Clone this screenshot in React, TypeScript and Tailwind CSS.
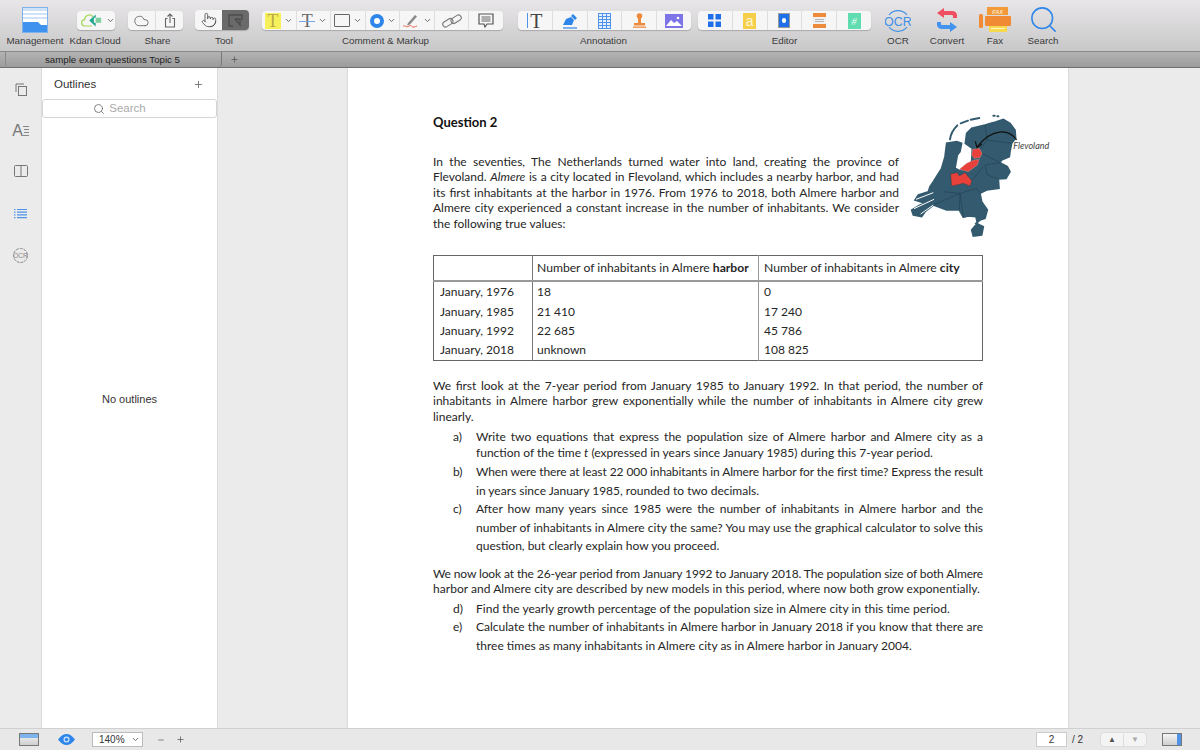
import type { ReactNode } from "react";
import { ChevronDown, Cloud, Minus, Plus, Pointer, Search } from "lucide-react";

const Chevron = () => (
  <ChevronDown className="w-[9px] h-[9px] text-[#666] ml-[3px] shrink-0" strokeWidth={2.5} />
);

const Cell = ({ children, last }: { children: ReactNode; last?: boolean }) => (
  <div
    className={`flex-1 h-full flex items-center justify-center ${
      last ? "" : "border-r border-[#dedede]"
    }`}
  >
    {children}
  </div>
);

const BtnGroup = ({ children }: { children: ReactNode }) => (
  <div className="h-[19px] mt-[11px] flex items-center rounded-[4px] bg-[#f6f6f6] shadow-[0_1px_1px_rgba(0,0,0,0.2)]">
    {children}
  </div>
);

const Group = ({
  label,
  className,
  labelClass = "",
  children,
}: {
  label: string;
  className: string;
  labelClass?: string;
  children: ReactNode;
}) => (
  <div className={`relative shrink-0 h-full ${className}`}>
    {children}
    <div
      className={`absolute left-[-20px] right-[-20px] top-[35px] text-center text-[9.800px] leading-[12px] text-[#3a3a3a] ${labelClass}`}
    >
      {label}
    </div>
  </div>
);

const Toolbar = () => (
  <div className="h-[51px] flex bg-gradient-to-b from-[#e8e6e8] to-[#c9c8c9]">
    <Group label="Management" className="w-[26px] ml-[22px]">
      <svg width="26" height="26" viewBox="0 0 26 26" className="mt-[7px]">
        <rect x="0.5" y="0.5" width="25" height="25" fill="#fff" stroke="#7fb2ea" />
        <rect x="1" y="1" width="24" height="3" fill="#cfe2f8" />
        <rect x="1" y="6" width="24" height="2" fill="#cfe2f8" />
        <rect x="1" y="10" width="24" height="2" fill="#cfe2f8" />
        <path d="M1 15h15l3 3h6v7H1z" fill="#3f93ee" />
      </svg>
    </Group>
    <Group label="Kdan Cloud" className="w-[38px] ml-[29px]" labelClass="-translate-x-[1px]">
      <BtnGroup>
        <svg width="24" height="15" viewBox="0 0 24 15" className="ml-[4px]">
          <path
            d="M12 13.500H4.500a3.500 3.500 0 0 1-.5-7 5 5 0 0 1 9-3"
            fill="none"
            stroke="#a5d65a"
            strokeWidth="1.300"
          />
          <path d="M16 1v3.500h-2V10h2v4L9 7.500z" fill="#1fa58c" />
          <path d="M16 4.500h6V10h-6z" fill="#7ed0a0" />
        </svg>
        <Chevron />
      </BtnGroup>
    </Group>
    <Group label="Share" className="w-[55px] ml-[13px]" labelClass="translate-x-[2px]">
      <BtnGroup>
        <Cell>
          <Cloud className="w-[17px] h-[16px] text-[#666]" strokeWidth={1.3} />
        </Cell>
        <Cell last>
          <svg width="12" height="15" viewBox="0 0 12 15" fill="none" stroke="#666" strokeWidth="1.1">
            <path d="M3.5 5.5H1.5v8.5h9V5.5H8.500" />
            <path d="M6 10V1M3.500 3.500 6 1l2.500 2.500" />
          </svg>
        </Cell>
      </BtnGroup>
    </Group>
    <Group label="Tool" className="w-[54px] ml-[12px]" labelClass="translate-x-[2px]">
      <div className="h-[20px] mt-[10px] flex rounded-[4px] bg-[#f6f6f6] shadow-[0_1px_1px_rgba(0,0,0,0.2)] overflow-hidden">
        <div className="flex-1 flex items-center justify-center">
          <Pointer className="w-[16px] h-[18px] text-[#555]" strokeWidth={1.3} />
        </div>
        <div className="flex-1 flex items-center justify-center bg-[#6a6a6a]">
          <svg width="15" height="13" viewBox="0 0 15 13" fill="none" stroke="#4c4c4c" strokeWidth="1.300">
            <path d="M5 12H1V1h13v5" />
            <path d="M7 5h5v5M7 5l6 7" />
          </svg>
        </div>
      </div>
    </Group>
    <Group label="Comment & Markup" className="w-[241px] ml-[13px]" labelClass="translate-x-[3px]">
      <BtnGroup>
        <Cell>
          <span className="flex items-center">
            <span className="w-[16px] h-[16px] bg-[#f6f05a] text-[#b9a94a] text-[18px] leading-[16px] text-center font-['Liberation_Serif',serif]">
              T
            </span>
            <Chevron />
          </span>
        </Cell>
        <Cell>
          <span className="flex items-center">
            <span className="relative w-[16px] h-[16px] text-[#666] text-[18px] leading-[16px] text-center font-['Liberation_Serif',serif]">
              T
              <span className="absolute left-0 right-0 top-[8px] h-px bg-[#7aa6e6]" />
            </span>
            <Chevron />
          </span>
        </Cell>
        <Cell>
          <span className="flex items-center">
            <span className="w-[16px] h-[13px] border border-[#666] rounded-[1px]" />
            <Chevron />
          </span>
        </Cell>
        <Cell>
          <span className="flex items-center">
            <span className="w-[14px] h-[14px] rounded-full border-[4px] border-[#2f86ea] bg-white" />
            <Chevron />
          </span>
        </Cell>
        <Cell>
          <span className="flex items-center">
            <svg width="18" height="16" viewBox="0 0 18 16" fill="none">
              <path d="M6 10 13 2l2 1.500-7 8-3 1z" fill="#8a8a8a" />
              <path d="M1 13.500c2-2 3 1 5 0s3-1.500 4 0 3 0 5-.5" stroke="#e8664a" />
            </svg>
            <Chevron />
          </span>
        </Cell>
        <Cell>
          <svg width="20" height="14" viewBox="0 0 20 14" fill="none" stroke="#777" strokeWidth="1.100">
            <rect x="0.500" y="6" width="11" height="5.500" rx="2.700" transform="rotate(-32 6 9)" />
            <rect x="8.500" y="2.500" width="11" height="5.500" rx="2.700" transform="rotate(-32 14 5)" />
          </svg>
        </Cell>
        <Cell last>
          <svg width="16" height="15" viewBox="0 0 16 15" fill="none" stroke="#555" strokeWidth="1.200">
            <path d="M1 1h14v10H9l-2 3-1-3H1z" />
            <path d="M3.500 4h9M3.500 6h9M3.500 8h9" strokeWidth="0.900" />
          </svg>
        </Cell>
      </BtnGroup>
    </Group>
    <Group label="Annotation" className="w-[173px] ml-[15px]" labelClass="-translate-x-[1px]">
      <BtnGroup>
        <Cell>
          <span className="flex items-center text-[#444] text-[20px] leading-[18px] font-['Liberation_Serif',serif]">
            <span className="w-px h-[15px] bg-[#4f94e8] mr-[2px]" />T
          </span>
        </Cell>
        <Cell>
          <svg width="16" height="16" viewBox="0 0 16 16">
            <path d="M1 12 4 6l5-2 3 3-2 5zM9 3l2-2 4 4-2 2z" fill="#2f86ea" />
            <path d="M1 15h14" stroke="#2f86ea" strokeWidth="1.200" />
          </svg>
        </Cell>
        <Cell>
          <svg width="13" height="16" viewBox="0 0 13 16">
            <rect x="0.500" y="0.500" width="12" height="15" fill="#e6f0fc" stroke="#4f94e8" />
            <path d="M0 3.500h13M0 6.500h13M0 9.500h13M0 12.500h13M4.500 0v16M8.500 0v16" stroke="#4f94e8" />
          </svg>
        </Cell>
        <Cell>
          <svg width="13" height="15" viewBox="0 0 13 15" fill="#ee8a3c">
            <circle cx="6.500" cy="3" r="2.800" />
            <rect x="5" y="4" width="3" height="6" />
            <rect x="1" y="10" width="11" height="2.500" />
            <rect x="0" y="13.500" width="13" height="1.300" />
          </svg>
        </Cell>
        <Cell last>
          <svg width="18" height="14" viewBox="0 0 18 14">
            <rect width="18" height="14" fill="#7d74e8" />
            <path d="M1 12 6 6l3 3 3-2 5 5z" fill="#fff" />
            <circle cx="13" cy="4" r="1.300" fill="#fff" />
          </svg>
        </Cell>
      </BtnGroup>
    </Group>
    <Group label="Editor" className="w-[173px] ml-[7px]">
      <BtnGroup>
        <Cell>
          <svg width="13" height="13" viewBox="0 0 13 13" fill="#1f6fe8">
            <rect width="5.500" height="5.500" />
            <rect x="7.500" width="5.500" height="5.500" />
            <rect y="7.500" width="5.500" height="5.500" />
            <rect x="7.500" y="7.500" width="5.500" height="5.500" />
          </svg>
        </Cell>
        <Cell>
          <span className="w-[13px] h-[16px] bg-[#f6cf4a] text-[#fff7d8] text-[14px] leading-[17px] text-center font-['Liberation_Sans',sans-serif]">
            a
          </span>
        </Cell>
        <Cell>
          <span className="w-[12px] h-[15px] bg-[#1f6fe8] border border-[#9a9a9a] flex items-center justify-center">
            <span className="w-[4px] h-[5px] rounded-full bg-white" />
          </span>
        </Cell>
        <Cell>
          <span className="w-[13px] h-[15px] flex flex-col justify-between bg-[#f0f0f0]">
            <span className="h-[4px] bg-[#ee8a3c]" />
            <span className="h-[3px] mx-[2px] border-y border-[#b5b5b5]" />
            <span className="h-[4px] bg-[#ee8a3c]" />
          </span>
        </Cell>
        <Cell last>
          <span className="w-[13px] h-[16px] bg-[#5fdcb0] text-[#e9fff6] text-[11px] leading-[17px] italic text-center font-['Liberation_Serif',serif]">
            #
          </span>
        </Cell>
      </BtnGroup>
    </Group>
    <Group label="OCR" className="w-[24px] ml-[15px]">
      <svg width="26" height="26" viewBox="0 0 26 26" className="mt-[8px] ml-[-1px]" fill="none" stroke="#3d8fe8">
        <path d="M4 7a11.500 11.500 0 0 1 18 0M4 19a11.500 11.500 0 0 0 18 0" strokeWidth="1.200" />
        <text
          x="13"
          y="17.500"
          textAnchor="middle"
          fontSize="12.500"
          fill="#3d8fe8"
          stroke="none"
          fontFamily="Liberation Sans"
        >
          OCR
        </text>
      </svg>
    </Group>
    <Group label="Convert" className="w-[22px] ml-[26px]">
      <svg width="22" height="26" viewBox="0 0 22 26" className="mt-[7px]">
        <path d="M1 6 8 1v3h8c3 0 5 2 5 4v3h-4V9c0-1-1-1-2-1H8v3z" fill="#ef4f60" />
        <path d="M21 20l-7 5v-3H6c-3 0-5-2-5-4v-3h4v2c0 1 1 1 2 1h7v-3z" fill="#4293ee" />
      </svg>
    </Group>
    <Group label="Fax" className="w-[32px] ml-[21px]">
      <svg width="32" height="27" viewBox="0 0 32 27" className="mt-[6px]">
        <rect x="8" y="1" width="21" height="8" fill="#f29a3a" />
        <text
          x="18.500"
          y="7.500"
          textAnchor="middle"
          fontSize="5.500"
          fontWeight="700"
          fontStyle="italic"
          fill="#fde6c6"
          fontFamily="Liberation Sans"
        >
          FAX
        </text>
        <rect x="6" y="10" width="26" height="10" rx="1" fill="#f08a34" />
        <rect x="0" y="8" width="4" height="14" rx="1.500" fill="#f08a34" />
        <rect x="10" y="20" width="18" height="6" fill="#f7d84e" />
        <rect x="12" y="22" width="14" height="1" fill="#fff6c0" />
      </svg>
    </Group>
    <Group label="Search" className="w-[24px] ml-[20px]">
      <Search className="w-[31px] h-[31px] mt-[4px] ml-[-3px] text-[#2f86ea]" strokeWidth={1.200} />
    </Group>
  </div>
);

const TabBar = () => (
  <div className="h-[17px] flex bg-gradient-to-b from-[#b3b3b3] to-[#9c9c9c] border-t border-[#8a8a8a] border-b border-b-[#6f6f6f]">
    <div className="w-[217px] ml-[5px] border-l border-[#8a8a8a] border-r border-r-[#777] rounded-b-[4px] pl-[39px] text-[9.700px] leading-[15px] text-[#222]">
      sample exam questions Topic 5
    </div>
    <Plus className="w-[9px] h-[9px] ml-[8px] mt-[3px] text-[#555]" strokeWidth={2} />
  </div>
);

const Rail = () => (
  <div className="w-[42px] shrink-0 bg-[#ebebeb] border-r border-[#dcdcdc] flex flex-col items-center gap-[26px] pt-[15px]">
    <svg width="12" height="13" viewBox="0 0 12 13" fill="none" stroke="#777">
      <path d="M1 9V1h8" />
      <rect x="3.500" y="3.500" width="8" height="9" />
    </svg>
    <div className="flex items-center h-[16px] mt-[1px] text-[#777] text-[16px] leading-[16px] font-['Liberation_Sans',sans-serif]">
      A
      <svg width="6" height="12" viewBox="0 0 6 12" stroke="#888">
        <path d="M0 1.500h6M1 4.500h5M1 7.500h5M0 10.500h6" />
      </svg>
    </div>
    <svg width="14" height="12" viewBox="0 0 14 12" fill="none" stroke="#777">
      <rect x="0.500" y="0.500" width="13" height="11" rx="1" />
      <path d="M7 0.500v11" />
    </svg>
    <svg width="13" height="11" viewBox="0 0 13 11" stroke="#4f94e8" className="mt-[5px]" strokeWidth="1.200">
      <path d="M3 1.500h10M3 4.200h10M3 6.900h10M3 9.600h10" />
      <path d="M0 1.500h1.500M0 4.200h1.500M0 6.900h1.500M0 9.600h1.500" />
    </svg>
    <svg width="15" height="15" viewBox="0 0 15 15" fill="none" stroke="#888" className="mt-[3px]">
      <circle cx="7.500" cy="7.500" r="7" strokeDasharray="3 1" />
      <text x="7.500" y="10" textAnchor="middle" fontSize="6.500" fill="#888" stroke="none" fontFamily="Liberation Sans">
        OCR
      </text>
    </svg>
  </div>
);

const Sidebar = () => (
  <div className="w-[176px] shrink-0 bg-white border-r border-[#dadada] flex flex-col">
    <div className="h-[31px] shrink-0 flex items-center justify-between pt-[2px] pl-[12px] pr-[13px] text-[11.500px] text-[#333]">
      <span>Outlines</span>
      <Plus className="w-[11px] h-[11px] text-[#555]" strokeWidth={1.600} />
    </div>
    <div className="h-[19px] shrink-0 border border-[#d5d5d5] rounded-[3px] flex items-center justify-center gap-[4px] text-[11.500px] text-[#aaa] pr-[20px]">
      <Search className="w-[12px] h-[12px] text-[#666]" strokeWidth={1.600} />
      Search
    </div>
    <div className="pt-[275px] text-center text-[11px] leading-[12px] text-[#333]">No outlines</div>
  </div>
);

const NetherlandsMap = () => (
  <svg width="170" height="135" viewBox="0 0 510 405">
    <path
      d="M196 100 200 70 215 55 255 45 280 38 310 28 330 40 345 60 347 85 335 100 330 125 328 140 305 150 300 158 322 170 330 185 318 205 295 207 297 235 260 240 240 250 245 275 262 300 255 325 240 330 228 340 250 350 245 375 220 378 215 360 232 340 228 320 205 318 190 322 178 300 140 300 100 285 75 305 65 320 40 315 35 300 60 285 75 280 45 270 55 255 85 245 90 230 100 215 125 175 135 140 140 100 170 95 185 100 180 125 172 135 165 175 180 182 215 155 217 115z"
      fill="#335a6e"
      stroke="#335a6e"
      strokeWidth="5"
    />
    <path d="M48 268 100 248M42 296 102 268M62 312 100 285" stroke="#fff" strokeWidth="3" fill="none" />
    <path
      d="M150 88C152 70 160 58 172 46M182 40 204 32M212 29 238 24M280 17h4M292 19h3"
      stroke="#335a6e"
      strokeWidth="6"
      fill="none"
      strokeLinecap="round"
    />
    <path
      d="M255 45 262 90 240 118M262 90 335 100M246 130 300 158 255 165 262 195 295 207M130 245 180 250 230 235 240 250M100 285 180 250 190 322M180 250 178 300M215 212 250 170"
      stroke="#1f3a4a"
      strokeWidth="1.500"
      fill="none"
    />
    <path d="M218 118 238 115 246 130 240 143 222 145 215 135z" fill="#e8403a" stroke="#bdbdbd" />
    <path d="M222 150 238 148 232 165 205 185 178 178 200 160z" fill="#e8403a" stroke="#bdbdbd" />
    <path d="M152 192 172 188 178 198 195 188 215 212 210 228 190 220 170 225 155 228z" fill="#e8403a" stroke="#333" />
    <path d="M350 90C325 55 275 55 232 110" fill="none" stroke="#111" strokeWidth="3.500" />
    <path d="M226 94 231 113 246 102" fill="none" stroke="#111" strokeWidth="3.500" />
    <text x="340" y="116" fontSize="27" fontStyle="italic" fill="#444" fontFamily="Lato">
      Flevoland
    </text>
  </svg>
);

// single line of the scanned page, keeps the original line breaks
const Line = ({
  children,
  plain,
  className = "",
}: {
  children: ReactNode;
  plain?: boolean;
  className?: string;
}) => (
  <div
    className={`whitespace-nowrap ${plain ? "" : "text-justify [text-align-last:justify]"} ${className}`}
  >
    {children}
  </div>
);

const ListItem = ({ mark, children }: { mark: string; children: ReactNode }) => (
  <div className="flex">
    <div className="w-[43px] shrink-0 pl-[20px]">{mark}</div>
    <div className="flex-1 min-w-0">{children}</div>
  </div>
);

const rows = [
  ["January, 1976", "18", "0"],
  ["January, 1985", "21 410", "17 240"],
  ["January, 1992", "22 685", "45 786"],
  ["January, 2018", "unknown", "108 825"],
];

const DataTable = () => (
  <table className="w-[550px] mt-[23px] table-fixed border-collapse border border-[#666] text-[12px]">
    <thead>
      <tr className="h-[25px] border-b-2 border-[#999]">
        <th className="w-[99px] border-r border-[#777]" />
        <th className="w-[226px] border-r border-[#999] font-normal text-left pl-[4px] text-[12.150px]">
          Number of inhabitants in Almere <b>harbor</b>
        </th>
        <th className="font-normal text-left pl-[5px] text-[12.150px]">
          Number of inhabitants in Almere <b>city</b>
        </th>
      </tr>
    </thead>
    <tbody>
      {rows.map((r, i) => (
        <tr key={r[0]} className={i === 0 ? "h-[21px]" : "h-[19.500px]"}>
          <td className="border-r border-[#777] pl-[6px]">{r[0]}</td>
          <td className="border-r border-[#999] pl-[4px]">{r[1]}</td>
          <td className="pl-[5px]">{r[2]}</td>
        </tr>
      ))}
    </tbody>
  </table>
);

const ExamPage = () => (
  <div className="w-[720px] ml-[130px] shrink-0 bg-white shadow-[0_0_2px_rgba(0,0,0,0.2)] pl-[85px] pr-[85px] pt-[47px] font-['Lato',sans-serif] text-[12px] leading-[15.500px] text-[#262626]">
    <div className="flex h-[117px]">
      <div className="w-[466px] shrink-0">
        <div className="text-[13px] font-bold text-[#111]">Question 2</div>
        <div className="mt-[23px]">
          <Line>In the seventies, The Netherlands turned water into land, creating the province of</Line>
          <Line>
            Flevoland. <i>Almere</i> is a city located in Flevoland, which includes a nearby harbor, and had
          </Line>
          <Line>its first inhabitants at the harbor in 1976. From 1976 to 2018, both Almere harbor and</Line>
          <Line>Almere city experienced a constant increase in the number of inhabitants. We consider</Line>
          <Line plain>the following true values:</Line>
        </div>
      </div>
      <div className="w-0 h-0 mt-[-5px] ml-[1px]">
        <NetherlandsMap />
      </div>
    </div>
    <DataTable />
    <div className="mt-[17px]">
      <Line>We first look at the 7-year period from January 1985 to January 1992. In that period, the number of</Line>
      <Line>inhabitants in Almere harbor grew exponentially while the number of inhabitants in Almere city grew</Line>
      <Line plain>linearly.</Line>
    </div>
    <div className="mt-[5px]">
      <ListItem mark="a)">
        <Line>Write two equations that express the population size of Almere harbor and Almere city as a</Line>
        <Line plain>
          function of the time <i>t</i> (expressed in years since January 1985) during this 7-year period.
        </Line>
      </ListItem>
      <div className="mt-[3px] leading-[18.500px]">
        <ListItem mark="b)">
          <Line className="tracking-[-0.110px]">
            When were there at least 22 000 inhabitants in Almere harbor for the first time? Express the result
          </Line>
          <Line plain>in years since January 1985, rounded to two decimals.</Line>
        </ListItem>
        <ListItem mark="c)">
          <Line>After how many years since 1985 were the number of inhabitants in Almere harbor and the</Line>
          <Line>number of inhabitants in Almere city the same? You may use the graphical calculator to solve this</Line>
          <Line plain>question, but clearly explain how you proceed.</Line>
        </ListItem>
      </div>
    </div>
    <div className="mt-[10px]">
      <Line className="tracking-[-0.150px]">
        We now look at the 26-year period from January 1992 to January 2018. The population size of both Almere
      </Line>
      <Line plain className="tracking-[0.040px]">
        harbor and Almere city are described by new models in this period, where now both grow exponentially.
      </Line>
    </div>
    <div className="mt-[3px] leading-[18.500px]">
      <ListItem mark="d)">
        <Line plain className="tracking-[0.020px]">
          Find the yearly growth percentage of the population size in Almere city in this time period.
        </Line>
      </ListItem>
      <ListItem mark="e)">
        <Line>Calculate the number of inhabitants in Almere harbor in January 2018 if you know that there are</Line>
        <Line plain>three times as many inhabitants in Almere city as in Almere harbor in January 2004.</Line>
      </ListItem>
    </div>
  </div>
);

const WindowIcon = ({ right }: { right?: boolean }) => (
  <span className="w-[20px] h-[13px] flex flex-col border border-[#777] bg-gradient-to-b from-[#f4f4f4] to-[#cfcfcf] relative">
    {right ? (
      <span className="absolute right-0 top-0 bottom-0 w-[4px] bg-[#4f94e8]" />
    ) : (
      <span className="h-[4px] bg-[#7db4ec]" />
    )}
  </span>
);

const StatusBar = () => (
  <div className="h-[22px] flex items-center bg-[#e8e8e8] border-t border-[#d0d0d0] text-[10px] text-[#333]">
    <div className="ml-[19px]">
      <WindowIcon />
    </div>
    <svg width="17" height="11" viewBox="0 0 17 11" className="ml-[19px]">
      <path d="M0 5.500C3 1.500 5.500 0 8.500 0s5.500 1.500 8.500 5.500C14 9.500 11.500 11 8.500 11S3 9.500 0 5.500z" fill="#2f86ea" />
      <circle cx="8.500" cy="5.500" r="3" fill="#cfe3fa" />
      <circle cx="8.500" cy="5.500" r="1.700" fill="#2f86ea" />
    </svg>
    <div className="w-[51px] h-[15px] ml-[17px] bg-white border border-[#bbb] flex items-center justify-between pl-[6px] pr-[2px]">
      140%
      <ChevronDown className="w-[9px] h-[9px] text-[#666]" strokeWidth={2.500} />
    </div>
    <Minus className="w-[8px] h-[8px] ml-[14px] text-[#555]" strokeWidth={2} />
    <Plus className="w-[9px] h-[9px] ml-[11px] text-[#555]" strokeWidth={2} />
    <div className="w-[31px] h-[15px] ml-auto bg-white border border-[#ccc] text-center leading-[13px]">2</div>
    <span className="ml-[5px] w-[28px]">/ 2</span>
    <div className="w-[47px] h-[15px] flex rounded-[4px] bg-[#f4f4f4] border border-[#ddd] items-center text-[8px] text-center">
      <span className="flex-1 text-[#555] border-r border-[#ddd]">▲</span>
      <span className="flex-1 text-[#aaa]">▼</span>
    </div>
    <div className="ml-[15px] mr-[18px]">
      <WindowIcon right />
    </div>
  </div>
);

export default function App() {
  return (
    <div className="w-[1200px] h-[750px] overflow-hidden flex flex-col font-['Liberation_Sans',sans-serif] bg-[#ebebeb]">
      <Toolbar />
      <TabBar />
      <div className="h-[660px] flex overflow-hidden">
        <Rail />
        <Sidebar />
        <ExamPage />
      </div>
      <StatusBar />
    </div>
  );
}
